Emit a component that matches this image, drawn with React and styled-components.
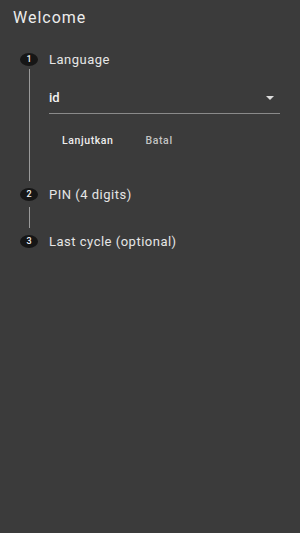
import React from "react";
import styled, { createGlobalStyle } from "styled-components";

const GlobalStyle = createGlobalStyle`
  html, body {
    margin: 0;
    padding: 0;
    background: #3b3b3b;
  }
  body {
    font-family: Roboto, "Liberation Sans", sans-serif;
    -webkit-font-smoothing: antialiased;
  }
`;

const Page = styled.div`
  width: 300px;
  min-height: 533px;
  background: #3b3b3b;
  padding-top: 8px;
  box-sizing: border-box;
`;

const Title = styled.div`
  padding-left: 13px;
  font-size: 16px;
  line-height: 20px;
  color: #ececec;
  letter-spacing: 1px;
`;

const Stepper = styled.div`
  margin-top: 21px;
  display: flex;
  flex-direction: column;
`;

const StepHeader = styled.div`
  display: flex;
  align-items: center;
  gap: 11px;
  height: 20px;
  padding-left: 20px;
`;

const Circle = styled.div`
  width: 18px;
  height: 13px;
  border-radius: 50%;
  background: #161616;
  color: #f0f0f0;
  font-size: 9px;
  font-weight: 500;
  display: flex;
  align-items: center;
  justify-content: center;
  flex-shrink: 0;
`;

const StepLabel = styled.div`
  font-size: 13px;
  color: #e6e6e6;
  letter-spacing: 0.5px;
`;

const StepBody = styled.div`
  margin: 0 0 3px 29px;
  border-left: 1px solid #9a9a9a;
  padding: 13px 20px 29px 19px;
`;

const Connector = styled.div`
  margin: 3px 0 3px 29px;
  height: 21px;
  border-left: 1px solid #9a9a9a;
`;

const Select = styled.div`
  height: 32px;
  box-sizing: border-box;
  border-bottom: 1px solid #8a8a8a;
  display: flex;
  align-items: center;
  justify-content: space-between;
  padding-right: 6px;
`;

const SelectValue = styled.span`
  font-size: 13px;
  font-weight: 500;
  color: #f2f2f2;
`;

const Arrow = styled.span`
  width: 0;
  height: 0;
  border-left: 4px solid transparent;
  border-right: 4px solid transparent;
  border-top: 4px solid #dcdcdc;
`;

const Actions = styled.div`
  display: flex;
  gap: 6px;
  margin-top: 14px;
`;

const ActionButton = styled.button`
  height: 24px;
  padding: 0 13px;
  background: transparent;
  border: none;
  font-family: inherit;
  font-size: 10.5px;
  font-weight: 500;
  letter-spacing: 0.6px;
  color: ${props => (props.primary ? "#ededed" : "#c4c4c4")};
`;

export default function App() {
  return (
    <>
      <GlobalStyle />
      <Page>
        <Title>Welcome</Title>
        <Stepper>
          <StepHeader>
            <Circle>1</Circle>
            <StepLabel>Language</StepLabel>
          </StepHeader>
          <StepBody>
            <Select>
              <SelectValue>id</SelectValue>
              <Arrow />
            </Select>
            <Actions>
              <ActionButton primary>Lanjutkan</ActionButton>
              <ActionButton>Batal</ActionButton>
            </Actions>
          </StepBody>
          <StepHeader>
            <Circle>2</Circle>
            <StepLabel>PIN (4 digits)</StepLabel>
          </StepHeader>
          <Connector />
          <StepHeader>
            <Circle>3</Circle>
            <StepLabel>Last cycle (optional)</StepLabel>
          </StepHeader>
        </Stepper>
      </Page>
    </>
  );
}
